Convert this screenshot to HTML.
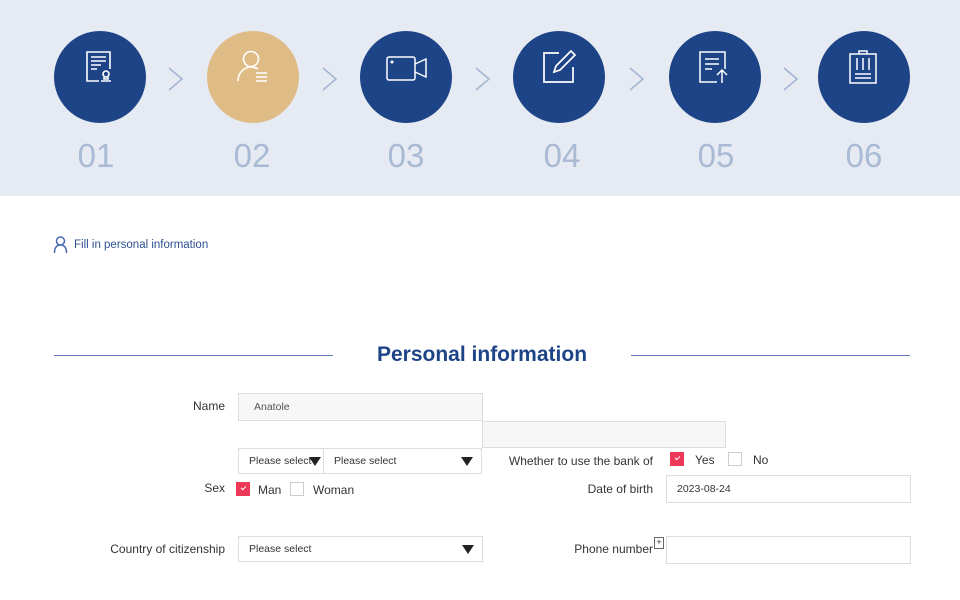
<!DOCTYPE html>
<html><head><meta charset="utf-8"><style>
body{margin:0;width:960px;height:600px;background:#fff;font-family:"Liberation Sans",sans-serif;position:relative;overflow:hidden}
.a{position:absolute}
.band{left:0;top:0;width:960px;height:196px;background:#e6ebf3}
.c{width:92px;height:92px;border-radius:50%;background:#1e4488;top:31px}
.c svg{position:absolute;left:28px;top:18px}
.n{top:137px;width:92px;text-align:center;font-size:33px;color:#a9bad4;font-weight:300}
.ar{top:66px}
.lbl{font-size:12px;color:#333;text-align:right}
.in{border:1px solid #ddd;box-sizing:border-box;background:#fff;font-size:10.5px;color:#333;padding-left:10px;display:flex;align-items:center}
.tri{position:absolute;right:8px;top:50%;margin-top:-4px;width:0;height:0;border-left:6px solid transparent;border-right:6px solid transparent;border-top:9px solid #222}
.cb{width:14px;height:14px;box-sizing:border-box;border:1px solid #ccc;background:#fff}
.cb.on{background:#ee3857;border-color:#ee3857}
.cb.on:after{content:"";position:absolute;left:4px;top:3px;width:4px;height:2px;border-left:1px solid #fff;border-bottom:1px solid #fff;transform:rotate(-45deg)}
</style></head><body>
<div class="a band"></div>
<div class="a c" style="left:54px"><svg width="36" height="36" viewBox="0 0 36 36" fill="none" stroke="#fff" stroke-width="1.6"><path d="M28 20V3H5v29h12"/><path d="M9 8h15M9 12h15M9 16h10M9 20h6"/><circle cx="24" cy="25" r="3"/><path d="M22 28v2h4v-2M19 32h10"/></svg></div>
<div class="a c" style="left:207px;background:#dfbb86"><svg width="36" height="36" viewBox="0 0 36 36" fill="none" stroke="#fff" stroke-width="1.6"><circle cx="16" cy="10" r="7.5"/><path d="M3 32c0-8 6-14 13-14 3 0 5 1 7 2"/><path d="M21 24h11M21 28h11M21 32h11"/></svg></div>
<div class="a c" style="left:360px"><svg style="left:25px" width="44" height="36" viewBox="0 0 44 36" fill="none" stroke="#fff" stroke-width="1.5"><rect x="2" y="8" width="28" height="23" rx="2"/><path d="M30 15l11-5v18l-11-5"/><circle cx="7" cy="13" r=".8" fill="#fff"/></svg></div>
<div class="a c" style="left:513px"><svg width="36" height="36" viewBox="0 0 36 36" fill="none" stroke="#fff" stroke-width="1.7"><path d="M18 4H3v29h29V18"/><path d="M30 2l4 4-15 15-6 2 2-6z"/></svg></div>
<div class="a c" style="left:669px"><svg width="36" height="36" viewBox="0 0 36 36" fill="none" stroke="#fff" stroke-width="1.5"><path d="M20 33H3V3h25v17"/><path d="M8 10h14M8 15h14M8 20h7M25 34V21M20 26l5-5 5 5"/></svg></div>
<div class="a c" style="left:818px"><svg width="36" height="36" viewBox="0 0 36 36" fill="none" stroke="#fff" stroke-width="1.5"><rect x="4" y="5" width="26" height="29"/><path d="M13 5V2h8v3M11 9v12M17 9v12M23 9v12M9 25h16M9 29h16"/></svg></div>
<svg class="a ar" style="left:166px" width="20" height="26"><path d="M3 2l13 11-13 11" stroke="#a3b5d1" stroke-width="1.6" fill="none"/></svg>
<svg class="a ar" style="left:320px" width="20" height="26"><path d="M3 2l13 11-13 11" stroke="#a3b5d1" stroke-width="1.6" fill="none"/></svg>
<svg class="a ar" style="left:473px" width="20" height="26"><path d="M3 2l13 11-13 11" stroke="#a3b5d1" stroke-width="1.6" fill="none"/></svg>
<svg class="a ar" style="left:627px" width="20" height="26"><path d="M3 2l13 11-13 11" stroke="#a3b5d1" stroke-width="1.6" fill="none"/></svg>
<svg class="a ar" style="left:781px" width="20" height="26"><path d="M3 2l13 11-13 11" stroke="#a3b5d1" stroke-width="1.6" fill="none"/></svg>
<div class="a n" style="left:50px">01</div>
<div class="a n" style="left:206px">02</div>
<div class="a n" style="left:360px">03</div>
<div class="a n" style="left:516px">04</div>
<div class="a n" style="left:670px">05</div>
<div class="a n" style="left:818px">06</div>

<svg class="a" style="left:53px;top:236px" width="15" height="18" viewBox="0 0 15 18" fill="none" stroke="#4a6db0" stroke-width="1.5"><circle cx="7.5" cy="5" r="4"/><path d="M1.5 17c0-6 2.5-8 6-8s6 2 6 8"/></svg>
<div class="a" style="left:74px;top:239px;font-size:11.5px;color:#2d4f91">Fill in personal information</div>

<div class="a" style="left:54px;top:355px;width:279px;height:1px;background:#5a7bbf"></div>
<div class="a" style="left:631px;top:355px;width:279px;height:1px;background:#5a7bbf"></div>
<div class="a" style="left:333px;top:343px;width:298px;text-align:center;font-size:21px;font-weight:bold;color:#1e4488">Personal information</div>

<div class="a lbl" style="left:150px;top:399px;width:75px">Name</div>
<div class="a in" style="left:238px;top:393px;width:245px;height:28px;background:#f7f7f7;color:#555;padding-left:15px">Anatole</div>
<div class="a in" style="left:482px;top:421px;width:244px;height:27px;background:#f7f7f7"></div>
<div class="a in" style="left:238px;top:448px;width:86px;height:26px">Please select<span class="tri" style="right:2px"></span></div>
<div class="a in" style="left:323px;top:448px;width:159px;height:26px">Please select<span class="tri"></span></div>
<div class="a lbl" style="left:480px;top:454px;width:173px">Whether to use the bank of</div>
<div class="a cb on" style="left:670px;top:452px"></div>
<div class="a" style="left:695px;top:453px;font-size:12px;color:#333">Yes</div>
<div class="a cb" style="left:728px;top:452px"></div>
<div class="a" style="left:753px;top:453px;font-size:12px;color:#333">No</div>
<div class="a lbl" style="left:150px;top:481px;width:75px">Sex</div>
<div class="a cb on" style="left:236px;top:482px"></div>
<div class="a" style="left:258px;top:483px;font-size:12px;color:#333">Man</div>
<div class="a cb" style="left:290px;top:482px"></div>
<div class="a" style="left:313px;top:483px;font-size:12px;color:#333">Woman</div>
<div class="a lbl" style="left:560px;top:482px;width:93px">Date of birth</div>
<div class="a in" style="left:666px;top:475px;width:245px;height:28px">2023-08-24</div>
<div class="a lbl" style="left:80px;top:542px;width:145px">Country of citizenship</div>
<div class="a in" style="left:238px;top:536px;width:245px;height:26px">Please select<span class="tri"></span></div>
<div class="a lbl" style="left:560px;top:542px;width:93px">Phone number</div>
<div class="a" style="left:654px;top:537px;width:8px;height:10px;border:1px solid #666;font-size:9px;line-height:9px;text-align:center;color:#333">+</div>
<div class="a in" style="left:666px;top:536px;width:245px;height:28px"></div>
</body></html>
